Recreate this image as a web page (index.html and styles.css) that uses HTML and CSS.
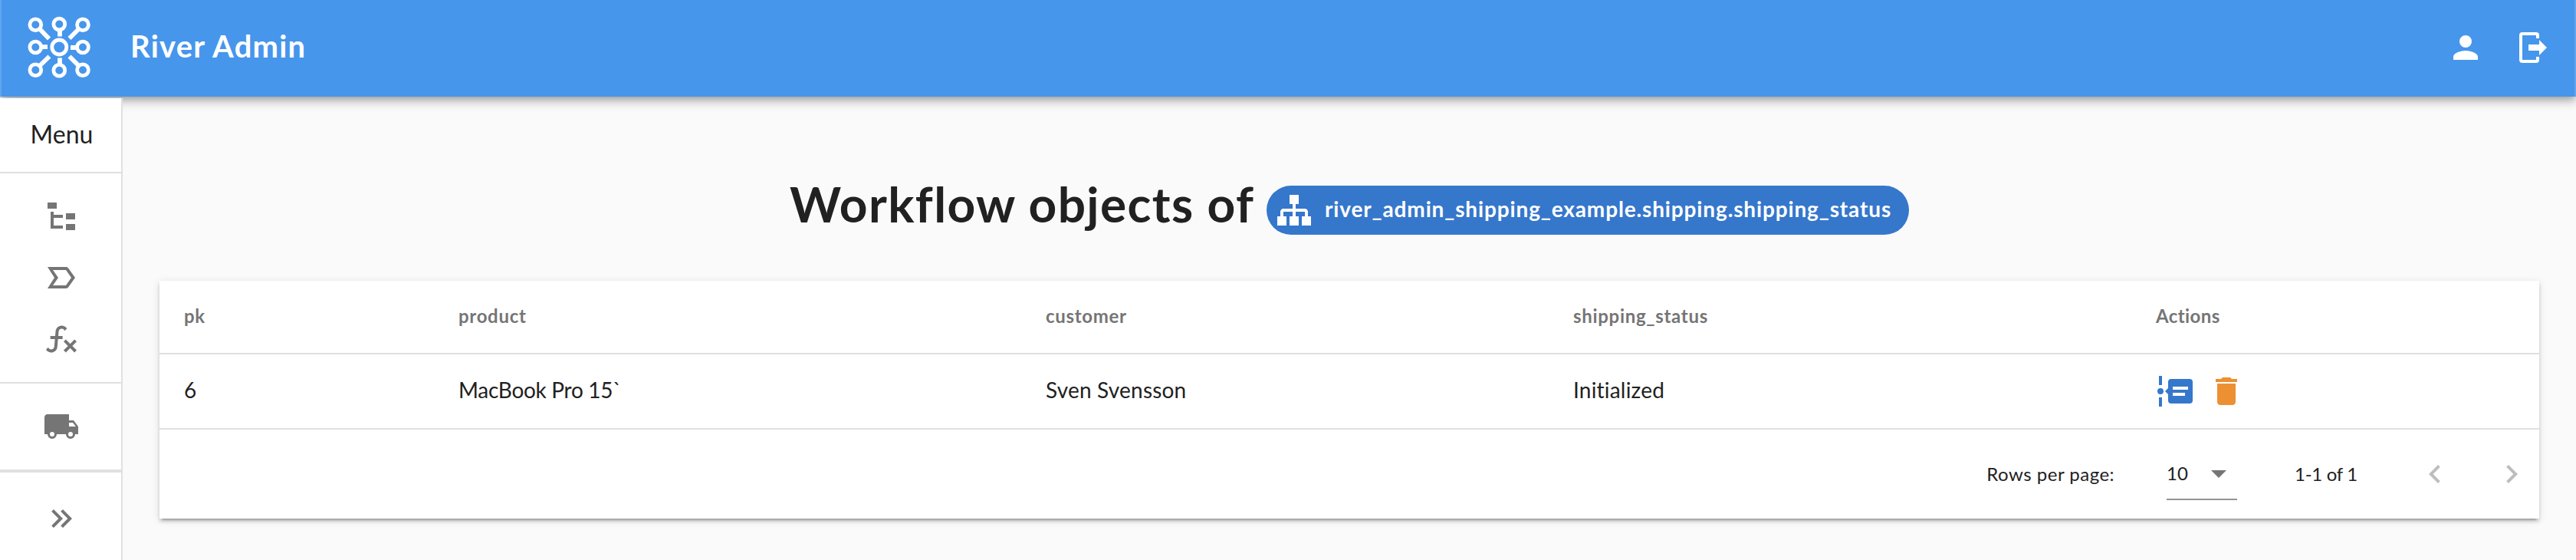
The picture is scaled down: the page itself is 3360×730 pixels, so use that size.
FILE: index.html
```html
<!DOCTYPE html>
<html lang="en">
<head>
<meta charset="utf-8">
<title>River Admin</title>
<link rel="stylesheet" href="styles.css">
</head>
<body>
<header class="app-bar">
  <svg class="logo" viewBox="0 0 84 84">
    <g class="logo-nodes">
      <circle cx="11.3" cy="12.3" r="7.4"/><circle cx="42.3" cy="11.5" r="7.4"/><circle cx="73" cy="12.3" r="7.4"/>
      <circle cx="11.3" cy="41.5" r="7.4"/><circle cx="42.3" cy="41.5" r="9.5"/><circle cx="73" cy="41.5" r="7.4"/>
      <circle cx="11.3" cy="71.2" r="7.4"/><circle cx="42.3" cy="71.8" r="7.4"/><circle cx="73" cy="71.2" r="7.4"/>
    </g>
    <path class="logo-spokes" d="M43 20v7.500M43 55.500v7.500M19.500 41.200h7.500M57 42h7.500M17 18l12 12.500M67.500 18l-12 12M17 65.500l12.500-12M67.500 65.500l-12-12"/>
  </svg>
  <h1 class="app-title">River Admin</h1>
  <nav class="app-actions">
    <svg class="icon" viewBox="0 0 24 24"><path d="M12 12a4 4 0 1 0 0-8 4 4 0 0 0 0 8zm0 2c-2.670 0-8 1.340-8 4v2h16v-2c0-2.660-5.330-4-8-4z"/></svg>
    <svg class="icon" viewBox="0 0 24 24"><path d="M16,17V14H9V10H16V7L21,12L16,17M14,2A2,2 0 0,1 16,4V6H14V4H5V20H14V18H16V20A2,2 0 0,1 14,22H5A2,2 0 0,1 3,20V4A2,2 0 0,1 5,2H14Z"/></svg>
  </nav>
</header>
<div class="shell">
  <aside class="drawer">
    <div class="menu-title">Menu</div>
    <div class="menu-group">
      <svg class="icon" viewBox="0 0 24 24"><path d="M3,3H9V7H3V3M15,10H21V14H15V10M15,17H21V21H15V17M13,13H7V18H13V20H5V9H7V11H13V13Z"/></svg>
      <svg class="icon" viewBox="0 0 24 24"><path d="M15 19H3l4.500-7L3 5h12c.65 0 1.260.31 1.630.84L21 12l-4.370 6.160c-.37.52-.98.84-1.630.84zm-8.500-2H15l3.500-5L15 7H6.500l3.500 5-3.500 5z"/></svg>
      <svg class="icon" viewBox="0 0 24 24"><path d="M12.42,5.29C11.32,5.19 10.35,6 10.25,7.11L10,10H12.82V12H9.82L9.38,17.07C9.18,19.27 7.24,20.9 5.04,20.7C3.79,20.59 2.66,19.9 2,18.83L3.5,17.33C3.83,18.38 4.96,18.97 6,18.63C6.78,18.39 7.33,17.7 7.4,16.89L7.82,12H4.82V10H8L8.27,6.93C8.46,4.73 10.39,3.1 12.6,3.28C13.86,3.39 15,4.09 15.66,5.17L14.16,6.67C13.91,5.9 13.23,5.36 12.42,5.29M22,13.65L20.59,12.24L17.76,15.07L14.93,12.24L13.5,13.65L16.35,16.5L13.5,19.3L14.93,20.71L17.76,17.89L20.59,20.71L22,19.3L19.17,16.5L22,13.65Z"/></svg>
    </div>
    <div class="menu-group menu-group-objects">
      <svg class="icon" viewBox="0 0 24 24"><path d="M18,18.5A1.5,1.5 0 0,1 16.5,17A1.5,1.5 0 0,1 18,15.5A1.5,1.5 0 0,1 19.5,17A1.5,1.5 0 0,1 18,18.5M19.5,9.5L21.46,12H17V9.5M6,18.5A1.5,1.5 0 0,1 4.5,17A1.5,1.5 0 0,1 6,15.5A1.5,1.5 0 0,1 7.5,17A1.5,1.5 0 0,1 6,18.5M20,8H17V4H3C1.89,4 1,4.89 1,6V17H3A3,3 0 0,0 6,20A3,3 0 0,0 9,17H15A3,3 0 0,0 18,20A3,3 0 0,0 21,17H23V12L20,8Z"/></svg>
    </div>
    <div class="menu-group menu-group-toggle">
      <svg class="icon" viewBox="0 0 24 24"><path d="M5.59,7.41L7,6L13,12L7,18L5.59,16.59L10.17,12L5.59,7.41M11.59,7.41L13,6L19,12L13,18L11.59,16.59L16.17,12L11.59,7.41Z"/></svg>
    </div>
  </aside>
  <main class="content">
    <div class="page-heading">
      <h2 class="page-title">Workflow objects of</h2>
      <div class="chip">
        <svg class="icon" viewBox="0 0 24 24"><path d="M9,2V8H11V11H5C3.89,11 3,11.89 3,13V16H1V22H7V16H5V13H11V16H9V22H15V16H13V13H19V16H17V22H23V16H21V13C21,11.89 20.11,11 19,11H13V8H15V2H9Z"/></svg>
        <span class="chip-text">river_admin_shipping_example.shipping.shipping_status</span>
      </div>
    </div>
    <section class="card">
      <div class="row row-head">
        <div class="cell">pk</div>
        <div class="cell">product</div>
        <div class="cell">customer</div>
        <div class="cell">shipping_status</div>
        <div class="cell cell-tight">Actions</div>
      </div>
      <div class="row row-body">
        <div class="cell"><span>6</span></div>
        <div class="cell cell-product"><span>MacBook Pro 15`</span></div>
        <div class="cell"><span>Sven Svensson</span></div>
        <div class="cell"><span>Initialized</span></div>
        <div class="cell cell-actions">
          <svg class="icon icon-timeline" viewBox="0 0 24 24"><path d="M4,2V8H2V2H4M2,22H4V16H2V22M5,12A2,2 0 0,1 3,14A2,2 0 0,1 1,12A2,2 0 0,1 3,10A2,2 0 0,1 5,12M24,6V18A2,2 0 0,1 22,20H10A2,2 0 0,1 8,18V14L6,12L8,10V6A2,2 0 0,1 10,4H22A2,2 0 0,1 24,6M19,13H11V15H19V13M21,9H11V11H21V9Z"/></svg>
          <svg class="icon icon-delete" viewBox="0 0 24 24"><path d="M6 19c0 1.100.9 2 2 2h8c1.100 0 2-.9 2-2V7H6v12zM19 4h-3.500l-1-1h-5l-1 1H5v2h14V4z"/></svg>
        </div>
      </div>
      <div class="pager">
        <span class="pager-label">Rows per page:</span>
        <div class="select"><span class="select-value">10</span>
          <svg class="icon" viewBox="0 0 24 24"><path d="M7 10l5 5 5-5z"/></svg>
        </div>
        <span class="pager-range">1-1 of 1</span>
        <svg class="icon pager-nav" viewBox="0 0 24 24"><path d="M15.410 16.580L10.830 12l4.580-4.590L14 6l-6 6 6 6z"/></svg>
        <svg class="icon pager-nav pager-next" viewBox="0 0 24 24"><path d="M8.590 16.580L13.170 12 8.590 7.410 10 6l6 6-6 6z"/></svg>
      </div>
    </section>
  </main>
</div>
</body>
</html>
```

FILE: styles.css
```css
* { box-sizing: border-box; }

body {
  margin: 0;
  height: 730px;
  overflow: hidden;
  background: #fafafa;
  color: #212121;
  font-family: Lato, "Open Sans", sans-serif;
  font-variant-ligatures: none;
}

h1, h2 { margin: 0; }

.icon {
  display: block;
  flex: none;
  width: 48px;
  height: 48px;
  fill: currentColor;
}

.app-bar {
  position: relative;
  display: flex;
  align-items: center;
  height: 126px;
  padding: 0 30px 2px 33px;
  border: solid #60a5ee;
  border-width: 0 2px;
  background: #4696ec;
  color: #fff;
  box-shadow: 0 4px 8px -2px rgba(0, 0, 0, .2), 0 8px 10px rgba(0, 0, 0, .14), 0 2px 20px rgba(0, 0, 0, .12);
}

.logo { width: 84px; height: 84px; }
.logo-nodes { fill: none; stroke: #fff; stroke-width: 4.8; }
.logo-spokes { fill: none; stroke: #fff; stroke-width: 5.8; }

.app-title {
  margin-left: 51px;
  padding-bottom: 5px;
  font-size: 40px;
  line-height: 48px;
  font-weight: 700;
  letter-spacing: 1.2px;
}

.app-actions { display: flex; gap: 40px; margin-left: auto; }

.shell { display: flex; height: 604px; }

.drawer {
  position: relative;
  width: 160px;
  height: 602px;
  margin-top: 2px;
  background: #fff;
  color: #757575;
  border-right: 2px solid #e0e0e0;
}

.menu-title {
  display: flex;
  align-items: center;
  justify-content: center;
  height: 98px;
  padding: 0 0 3px 3px;
  border-bottom: 2px solid #e0e0e0;
  color: #212121;
  font-size: 32px;
}

.menu-group {
  display: flex;
  flex-direction: column;
  align-items: center;
  gap: 32px;
  height: 274px;
  padding: 32px 0 0 2px;
  border-bottom: 2px solid #e0e0e0;
}

.menu-group-objects { height: 116px; border-bottom-width: 4px; }
.menu-group-toggle { height: 114px; padding-top: 36px; border: 0; }

.content { flex: 1; padding: 101px 48px 0; }

.page-heading {
  display: flex;
  justify-content: center;
  align-items: flex-start;
  gap: 16px;
  height: 139px;
}

.page-title {
  width: 606px;
  font-size: 64px;
  line-height: 78px;
  font-weight: 700;
  letter-spacing: 1.4px;
  white-space: nowrap;
}

.chip {
  display: flex;
  align-items: center;
  gap: 16px;
  width: 838px;
  height: 64px;
  margin-top: 15px;
  padding-left: 12px;
  border-radius: 32px;
  background: #3577cb;
  color: #fff;
  font-size: 28px;
  font-weight: 700;
  letter-spacing: .86px;
}

.chip-text { padding-bottom: 4px; }

.card {
  height: 310px;
  background: #fff;
  box-shadow: 0 6px 2px -4px rgba(0, 0, 0, .2), 0 4px 4px rgba(0, 0, 0, .14), 0 2px 10px rgba(0, 0, 0, .12);
}

.row {
  display: grid;
  grid-template-columns: 358px 766px 688px 760px 532px;
  border-bottom: 2px solid #e0e0e0;
}

.row-head {
  height: 96px;
  padding-bottom: 3px;
  color: #757575;
  font-size: 24px;
  font-weight: 700;
  letter-spacing: .7px;
}

.row-body { height: 98px; font-size: 28px; letter-spacing: .2px; }
.row-body span { padding-bottom: 4px; }

.cell { display: flex; align-items: center; padding: 0 32px; white-space: nowrap; }
.cell-tight { letter-spacing: .4px; }
.cell-product { letter-spacing: -.3px; }
.cell-actions { gap: 20px; }
.icon-timeline { color: #3577cb; }
.icon-delete { color: #ec9033; }

.pager {
  display: flex;
  align-items: center;
  justify-content: flex-end;
  height: 116px;
  padding-right: 12px;
  font-size: 24px;
}

.pager-label { padding-bottom: 1px; letter-spacing: .5px; }

.select {
  display: flex;
  align-items: center;
  justify-content: space-between;
  width: 92px;
  height: 68px;
  margin: 0 75px 0 68px;
  border-bottom: 2px solid #949494;
}

.select .icon { color: #757575; }
.select-value { padding-bottom: 1px; }
.pager-range { padding-bottom: 1px; letter-spacing: -.3px; }
.pager-nav { margin-left: 77px; color: #bdbdbd; }
.pager-next { margin-left: 52px; }
```
